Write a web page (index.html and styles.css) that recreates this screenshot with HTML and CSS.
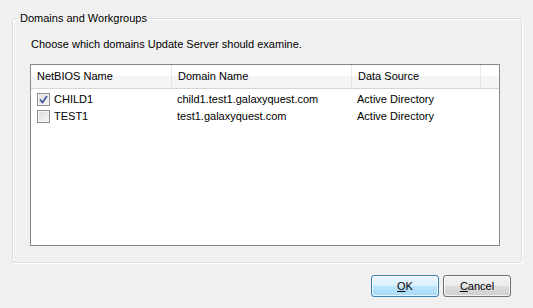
FILE: index.html
```html
<!DOCTYPE html>
<html lang="en">
<head>
    <meta charset="UTF-8">
    <title>Domains and Workgroups</title>
    <link rel="stylesheet" href="styles.css">
</head>
<body>

    <div class="dialog">
        <!-- Group box -->
        <fieldset class="group">
            <legend>Domains and Workgroups</legend>
            <p class="prompt">Choose which domains Update Server should examine.</p>

            <div class="listview">
                <div class="lv-row lv-head">
                    <div class="col">NetBIOS Name</div>
                    <div class="col">Domain Name</div>
                    <div class="col">Data Source</div>
                    <div class="col"></div>
                </div>
                <div class="lv-body">
                    <div class="lv-row">
                        <div class="cell">
                            <span class="check">
                                <svg width="9" height="9" viewBox="0 0 9 9"><path d="M1 4.5 L3.5 7.5 L8 1" fill="none" stroke="#3a4fa0" stroke-width="1.6"/></svg>
                            </span>CHILD1
                        </div>
                        <div class="cell">child1.test1.galaxyquest.com</div>
                        <div class="cell">Active Directory</div>
                    </div>
                    <div class="lv-row">
                        <div class="cell"><span class="check"></span>TEST1</div>
                        <div class="cell">test1.galaxyquest.com</div>
                        <div class="cell">Active Directory</div>
                    </div>
                </div>
            </div>
        </fieldset>

        <div class="buttons">
            <button class="btn btn-default"><u>O</u>K</button>
            <button class="btn"><u>C</u>ancel</button>
        </div>
    </div>

</body>
</html>
```

FILE: styles.css
```css
body {
    margin: 0;
    padding: 0;
    background: #f0f0f0;
    font-family: 'Liberation Sans', Arial, sans-serif;
    font-size: 11px;
    color: #000;
}

.dialog {
    padding: 11px 11px 0 12px;
}

/* Group box */
.group {
    margin: 0;
    width: 510px;
    height: 252px;
    padding: 0 21px 0 17px;
    border: 1px solid #d5dfe5;
    border-radius: 3px;
    box-shadow: inset 1px 1px 0 #fff, 1px 1px 0 #fff;
    box-sizing: border-box;
}

.group legend {
    margin-left: -12px;
    padding: 0 2px;
    line-height: 14px;
}

.prompt {
    margin: 12px 0 0 1px;
    line-height: 15px;
}

/* List view */
.listview {
    margin-top: 12px;
    height: 180px;
    background: #fff;
    border: 1px solid #828790;
}

.lv-row {
    display: grid;
    grid-template-columns: 141px 180px 129px 1fr;
}

.lv-head {
    height: 23px;
    background: linear-gradient(#ffffff 0%, #ffffff 50%, #f3f4f6 50%, #f3f4f6 100%);
    border-bottom: 1px solid #d5d5d5;
}

.lv-head .col {
    padding-left: 6px;
    line-height: 23px;
    border-right: 1px solid #e3e5e8;
}

.lv-head .col:last-child {
    border-right: none;
}

.lv-body {
    padding-top: 2px;
}

.lv-body .lv-row {
    height: 17px;
    line-height: 17px;
}

.cell {
    padding-left: 5px;
    white-space: nowrap;
    display: flex;
    align-items: center;
}

.check {
    width: 11px;
    height: 11px;
    margin: 0 4px 0 1px;
    border: 1px solid #8e8f8f;
    background: linear-gradient(135deg, #dcdcdc, #f8f8f8);
    box-shadow: inset 0 0 0 1px #f4f4f4;
    display: flex;
    align-items: center;
    justify-content: center;
}

/* Buttons */
.buttons {
    display: flex;
    justify-content: flex-end;
    gap: 4px;
    margin-top: 12px;
    padding-right: 11px;
}

.btn {
    width: 68px;
    height: 22px;
    padding: 0;
    font-family: 'Liberation Sans', Arial, sans-serif;
    font-size: 11px;
    color: #000;
    border: 1px solid #707070;
    border-radius: 3px;
    background: linear-gradient(#f2f2f2 0%, #ebebeb 50%, #dddddd 50%, #cfcfcf 100%);
    box-shadow: inset 0 0 0 1px rgba(255, 255, 255, 0.7);
}

.btn-default {
    border-color: #3c7fb1;
    background: linear-gradient(#eaf6fd 0%, #d9f0fc 50%, #bee6fd 50%, #a7d9f5 100%);
}
```
